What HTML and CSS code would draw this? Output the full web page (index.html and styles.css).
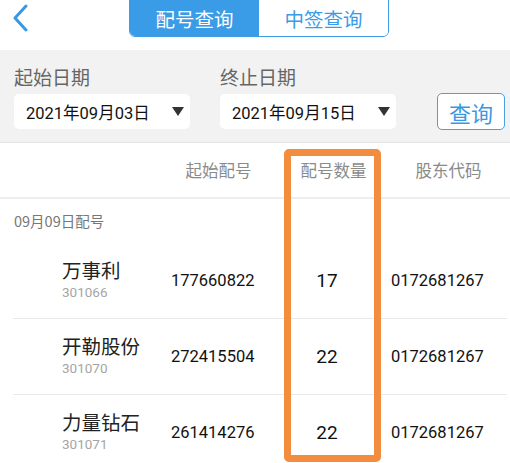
FILE: index.html
```html
<!DOCTYPE html>
<html>
<head>
    <meta charset="utf-8">
    <title>配号查询</title>
    <meta name="viewport" content="width=device-width">
    <link rel="stylesheet" href="styles.css">
</head>
<body>
    <div class="header">
        <a class="back">
            <svg width="18" height="28" viewBox="0 0 18 28">
                <polyline points="14,2 3,14 14,26" fill="none" stroke="#3a98e2" stroke-width="3" stroke-linecap="round" stroke-linejoin="round"/>
            </svg>
        </a>
        <div class="tabs">
            <div class="tab active">配号查询</div>
            <div class="tab">中签查询</div>
        </div>
    </div>

    <div class="filter">
        <div class="field">
            <div class="label">起始日期</div>
            <div class="select"><span>2021年09月03日</span><i class="arrow"></i></div>
        </div>
        <div class="field">
            <div class="label">终止日期</div>
            <div class="select"><span>2021年09月15日</span><i class="arrow"></i></div>
        </div>
        <button type="button" class="btn">查询</button>
    </div>

    <div class="thead">
        <div></div>
        <div>起始配号</div>
        <div>配号数量</div>
        <div>股东代码</div>
    </div>

    <div class="group-title">09月09日配号</div>

    <div class="list">
        <div class="row">
            <div class="stock">
                <div class="name">万事利</div>
                <div class="code">301066</div>
            </div>
            <div class="num">177660822</div>
            <div class="qty">17</div>
            <div class="holder">0172681267</div>
        </div>
        <div class="row">
            <div class="stock">
                <div class="name">开勒股份</div>
                <div class="code">301070</div>
            </div>
            <div class="num">272415504</div>
            <div class="qty">22</div>
            <div class="holder">0172681267</div>
        </div>
        <div class="row">
            <div class="stock">
                <div class="name">力量钻石</div>
                <div class="code">301071</div>
            </div>
            <div class="num">261414276</div>
            <div class="qty">22</div>
            <div class="holder">0172681267</div>
        </div>
    </div>

    <div class="highlight"></div>
</body>
</html>
```

FILE: styles.css
```css
html,
body {
    margin: 0;
    height: 100%;
    overflow: hidden;
    position: relative;
    background: #fff;
    font-family: "Noto Sans CJK SC", sans-serif;
    color: #333;
}
.header {
    height: 50px;
    position: relative;
    display: flex;
    justify-content: center;
}
.back {
    position: absolute;
    left: 12px;
    top: 4px;
}
.tabs {
    display: flex;
    margin: -6px 0 0 8px;
    height: 41px;
    border: 1.5px solid #3a9be6;
    border-radius: 6px;
    overflow: hidden;
}
.tab {
    width: 129px;
    display: flex;
    align-items: center;
    justify-content: center;
    padding-top: 5px;
    font-size: 19.5px;
    color: #3a9be6;
    background: #fff;
}
.tab.active {
    background: #3a9be6;
    color: #fff;
}

.filter {
    background: #f2f2f2;
    display: flex;
    align-items: flex-end;
    padding: 13px 5px 13px 14px;
    border-bottom: 1px solid #e3e3e3;
}
.field {
    margin-right: 30px;
}
.label {
    font-size: 19px;
    line-height: 27px;
    color: #666;
    margin-bottom: 4px;
}
.select {
    width: 176px;
    height: 35px;
    box-sizing: border-box;
    background: #fff;
    border-radius: 5px;
    display: flex;
    align-items: center;
    padding: 0 6px 0 12px;
    font-family: Roboto, "Noto Sans CJK SC", sans-serif;
    font-size: 16.5px;
    color: #111;
}
.select span {
    flex: 1;
}
.arrow {
    width: 0;
    height: 0;
    border-left: 6px solid transparent;
    border-right: 6px solid transparent;
    border-top: 9px solid #333;
}
.btn {
    margin-left: auto;
    width: 68px;
    height: 37px;
    margin-bottom: -1px;
    border: 1.5px solid #4a9fe0;
    border-radius: 5px;
    background: #fff;
    color: #3a98e2;
    font-family: "Noto Sans CJK SC", sans-serif;
    font-size: 22px;
    padding: 0;
    line-height: 32px;
}

.thead {
    display: grid;
    grid-template-columns: 161px 115px 115px 115px;
    height: 54px;
    align-items: center;
    text-align: center;
    font-size: 16.5px;
    color: #8a8a8a;
    border-bottom: 2px solid #eee;
}
.group-title {
    height: 44px;
    line-height: 44px;
    padding-left: 14px;
    font-size: 14.5px;
    color: #777;
}
.row {
    display: grid;
    grid-template-columns: 161px 115px 115px 1fr;
    height: 75px;
    align-items: center;
    margin: 0 3px 0 13px;
    border-bottom: 1px solid #e9e9e9;
}
.row:last-child {
    border-bottom: none;
}
.stock {
    padding-left: 49px;
    padding-bottom: 4px;
}
.name {
    font-size: 19.5px;
    line-height: 26px;
    color: #222;
}
.code {
    font-family: Roboto, sans-serif;
    font-size: 13.5px;
    line-height: 18px;
    color: #a5a5a5;
}
.num,
.qty,
.holder {
    font-family: Roboto, sans-serif;
    font-size: 16.5px;
    color: #111;
}
.num {
    margin-left: -3px;
}
.qty {
    font-size: 19px;
    text-align: center;
    margin-left: -39px;
}
.holder {
    margin-left: -13px;
}

.highlight {
    position: absolute;
    left: 284px;
    top: 149px;
    width: 97px;
    height: 313px;
    box-sizing: border-box;
    border: 7px solid #f28c3e;
    border-radius: 5px;
}
```
